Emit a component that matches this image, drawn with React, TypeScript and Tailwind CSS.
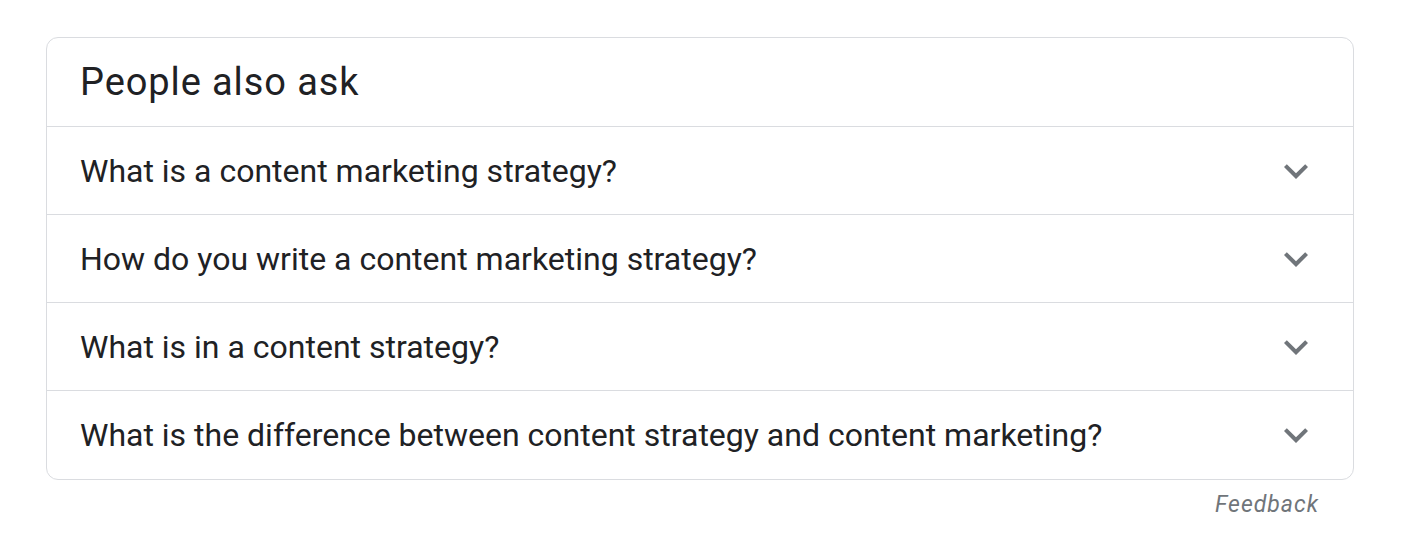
import React from "react";

const questions = [
  "What is a content marketing strategy?",
  "How do you write a content marketing strategy?",
  "What is in a content strategy?",
  "What is the difference between content strategy and content marketing?",
];

function Chevron() {
  return (
    <svg width="48" height="48" viewBox="0 0 24 24" className="shrink-0">
      <path d="M16.59 8.59L12 13.17 7.41 8.59 6 10l6 6 6-6z" fill="#70757a" />
    </svg>
  );
}

export default function App() {
  return (
    <div className="bg-white w-[1418px] h-[548px] pl-[46px] pt-[37px] font-['Roboto',sans-serif] text-[#202124]">
      <div className="w-[1308px]">
        <div className="border border-[#dadce0] rounded-[12px] overflow-hidden">
          <div className="h-[89px] flex items-center px-[33px] border-b border-[#dadce0]">
            <span className="text-[38px] leading-none tracking-[0.9px]">People also ask</span>
          </div>
          {questions.map((q, i) => (
            <div
              key={q}
              className={`h-[88px] flex items-center justify-between pl-[33px] pr-[33px] ${i < questions.length - 1 ? "border-b border-[#dadce0]" : ""}`}
            >
              <span className="text-[32px] leading-none">{q}</span>
              <Chevron />
            </div>
          ))}
        </div>
        <div className="flex justify-end pr-[35px] pt-[8px]">
          <span className="italic text-[23px] tracking-[1px] text-[#70757a]">Feedback</span>
        </div>
      </div>
    </div>
  );
}
